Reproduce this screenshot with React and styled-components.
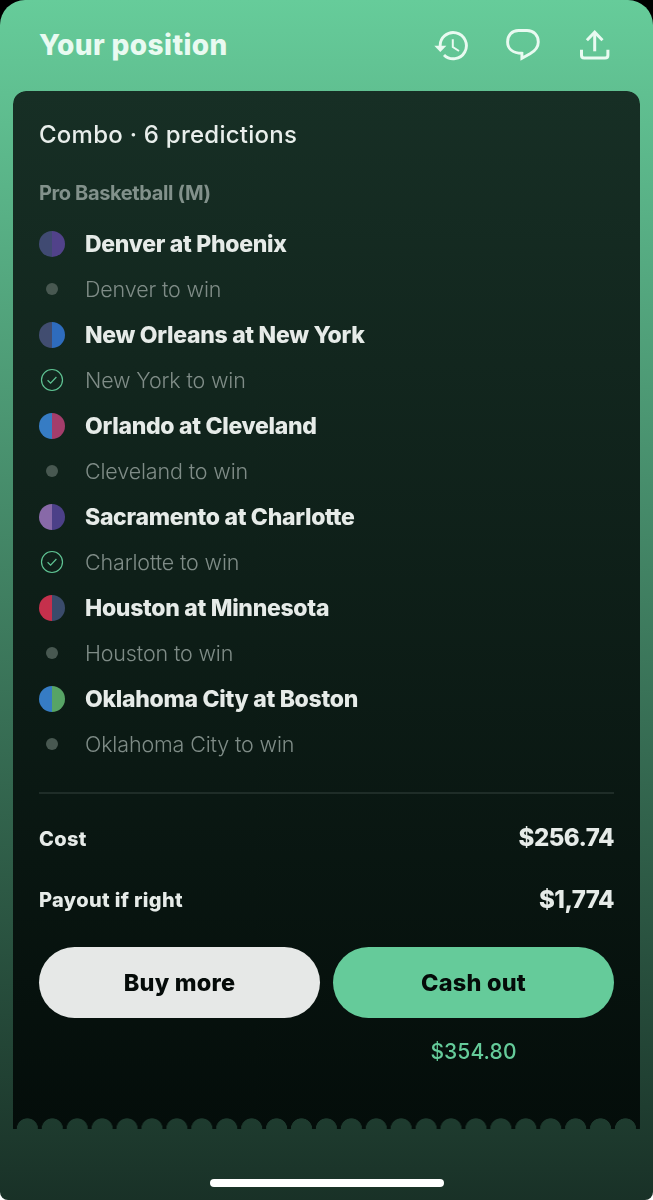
import styled, { createGlobalStyle } from "styled-components";

const GlobalStyle = createGlobalStyle`
  * {
    box-sizing: border-box;
  }

  body {
    margin: 0;
    background: linear-gradient(#000 50%, #fff 50%);
    font-family: Inter, "Liberation Sans", sans-serif;
  }
`

const Screen = styled.main`
  width: 653px;
  height: 1200px;
  padding: 0 13px;
  display: flex;
  flex-direction: column;
  background: linear-gradient(#66cc9a, #193127);
  border-radius: 25px 25px 8px 8px;
`

const Header = styled.header`
  height: 91px;
  padding: 0 27px 2px 26px;
  display: flex;
  align-items: center;
  justify-content: space-between;
`

const Title = styled.h1`
  margin: 0;
  font-size: 28px;
  font-weight: 800;
  line-height: 36px;
  letter-spacing: 0.4px;
  color: #e9faf1;
`

const Actions = styled.div`
  display: flex;
  gap: 36px;
`

const IconButton = styled.button`
  width: 36px;
  height: 36px;
  padding: 0;
  border: none;
  background: none;
  color: #e9faf1;
  cursor: pointer;

  svg {
    display: block;
  }
`

const Ticket = styled.section`
  height: 1038px;
  padding: 27px 26px 0;
  display: flex;
  flex-direction: column;
  background: linear-gradient(#172f25, #040d0a);
  border-radius: 13px 13px 0 0;
  /* torn edge: a row of half circles cut out of the last 12px */
  mask:
    linear-gradient(#000 0 0) 0 0 / 100% calc(100% - 12px) no-repeat,
    radial-gradient(circle at 50% 100%, transparent 10.3px, #000 11px) 1.9px 100% / 24.93px 12px repeat-x;
`

const Summary = styled.h2`
  margin: 0;
  font-size: 24px;
  font-weight: 450;
  line-height: 34px;
  letter-spacing: 0.25px;
  color: #e8eeeb;
`

const League = styled.h3`
  margin: 28px 0 14px;
  font-size: 20px;
  font-weight: 750;
  line-height: 27px;
  letter-spacing: -0.38px;
  color: #82918b;
`

const Legs = styled.ul`
  margin: 0;
  padding: 0;
  list-style: none;
`

const Row = styled.div`
  height: 45.5px;
  display: flex;
  align-items: center;
  gap: 20px;
`

const Marker = styled.span`
  width: 26px;
  height: 26px;
  display: flex;
  align-items: center;
  justify-content: center;
`

const TeamColors = styled.span`
  width: 26px;
  height: 26px;
  border-radius: 50%;
  background: linear-gradient(90deg, ${(props) => props.$away} 50%, ${(props) => props.$home} 50%);
`

const Dot = styled.span`
  width: 12px;
  height: 12px;
  border-radius: 50%;
  background: #485851;
`

const Match = styled.span`
  font-size: 23px;
  font-weight: 800;
  letter-spacing: -0.3px;
  color: #e6ebe8;
`

const Pick = styled.span`
  font-size: 21.5px;
  font-weight: 330;
  letter-spacing: -0.15px;
  color: #7f8c87;
`

const Divider = styled.hr`
  width: 100%;
  height: 2px;
  margin: 24.5px 0 0;
  border: none;
  background: #1f2d28;
`

const Totals = styled.dl`
  margin: 14.5px 0 16px;
`

const Total = styled.div`
  height: 61.5px;
  display: flex;
  align-items: center;
  justify-content: space-between;
  color: #e6ebe8;
`

const Label = styled.dt`
  font-size: 20px;
  font-weight: 800;
  letter-spacing: 0.35px;
`

const Amount = styled.dd`
  margin: 0 0 2px;
  font-size: 24px;
  font-weight: 800;
  letter-spacing: -0.5px;
`

const Buttons = styled.div`
  display: grid;
  grid-template-columns: 1fr 1fr;
  column-gap: 13px;
  row-gap: 19px;
`

const Button = styled.button`
  height: 71px;
  border: none;
  border-radius: 36px;
  background: ${(props) => (props.$primary ? "#65cb9a" : "#e6e8e7")};
  color: #050b09;
  font-family: inherit;
  font-size: 23.5px;
  font-weight: 800;
  letter-spacing: 0.2px;
  cursor: pointer;
`

const CashValue = styled.span`
  grid-column: 2;
  text-align: center;
  font-size: 21px;
  font-weight: 450;
  line-height: 30px;
  letter-spacing: 0.1px;
  color: #65cb9a;
`

const HomeIndicator = styled.div`
  width: 234px;
  height: 8px;
  margin: auto auto 13px;
  border-radius: 4px;
  background: #fff;
`

const HistoryIcon = () => (
  <svg width="36" height="36" viewBox="0 0 36 36" fill="none" stroke="currentColor" strokeWidth="2.9">
    <path d="M7.2 19.5A13.1 13.1 0 1 1 11 27.9" />
    <path d="M19.8 12.2V20L26 24" strokeWidth="2" />
    <path d="M1.3 18.7H13.4L7.3 25Z" fill="currentColor" stroke="none" />
  </svg>
)

const ChatIcon = () => (
  <svg width="36" height="36" viewBox="0 0 36 36" fill="none" stroke="currentColor" strokeWidth="2.9">
    <path d="M13.5 3.5H22C28.8 3.5 33.3 8.2 33.3 14.9C33.3 20.3 29.8 24 25 26.8L16.9 31.2V26.3C8 26.1 2.6 21.8 2.6 14.9C2.6 8.2 6.8 3.5 13.5 3.5Z" />
  </svg>
)

const ShareIcon = () => (
  <svg width="36" height="36" viewBox="0 0 36 36" fill="none" stroke="currentColor" strokeWidth="3">
    <path d="M17.7 24.3V5.2" />
    <path d="M9.9 13.2L17.7 5.2L25.5 13.2" />
    <path d="M4.5 22.8V28.2Q4.5 31 7.3 31H28.1Q30.9 31 30.9 28.2V22.8" />
  </svg>
)

const CheckIcon = () => (
  <svg width="24" height="24" viewBox="0 0 24 24" fill="none" stroke="#5fc393" strokeWidth="1.2">
    <circle cx="12" cy="12" r="10.5" />
    <path d="M7.6 12.3L10.6 15.2L16.4 9" />
  </svg>
)

const legs = [
  { match: "Denver at Phoenix", pick: "Denver to win", away: "#404a72", home: "#51428a" },
  { match: "New Orleans at New York", pick: "New York to win", away: "#414d70", home: "#2e6cbd", won: true },
  { match: "Orlando at Cleveland", pick: "Cleveland to win", away: "#367cc4", home: "#a43d6b" },
  { match: "Sacramento at Charlotte", pick: "Charlotte to win", away: "#8869a8", home: "#4c4088", won: true },
  { match: "Houston at Minnesota", pick: "Houston to win", away: "#c5304c", home: "#3a4b6b" },
  { match: "Oklahoma City at Boston", pick: "Oklahoma City to win", away: "#367cc4", home: "#57a465" },
]

const App = () => {
  return (
    <>
      <GlobalStyle />
      <Screen>
        <Header>
          <Title>Your position</Title>
          <Actions>
            <IconButton aria-label="History"><HistoryIcon /></IconButton>
            <IconButton aria-label="Chat"><ChatIcon /></IconButton>
            <IconButton aria-label="Share"><ShareIcon /></IconButton>
          </Actions>
        </Header>
        <Ticket>
          <Summary>Combo · 6 predictions</Summary>
          <League>Pro Basketball (M)</League>
          <Legs>
            {legs.map((leg) => (
              <li key={leg.match}>
                <Row>
                  <TeamColors $away={leg.away} $home={leg.home} />
                  <Match>{leg.match}</Match>
                </Row>
                <Row>
                  <Marker>{leg.won ? <CheckIcon /> : <Dot />}</Marker>
                  <Pick>{leg.pick}</Pick>
                </Row>
              </li>
            ))}
          </Legs>
          <Divider />
          <Totals>
            <Total>
              <Label>Cost</Label>
              <Amount>$256.74</Amount>
            </Total>
            <Total>
              <Label>Payout if right</Label>
              <Amount>$1,774</Amount>
            </Total>
          </Totals>
          <Buttons>
            <Button>Buy more</Button>
            <Button $primary>Cash out</Button>
            <CashValue>$354.80</CashValue>
          </Buttons>
        </Ticket>
        <HomeIndicator />
      </Screen>
    </>
  );
};

export default App;
